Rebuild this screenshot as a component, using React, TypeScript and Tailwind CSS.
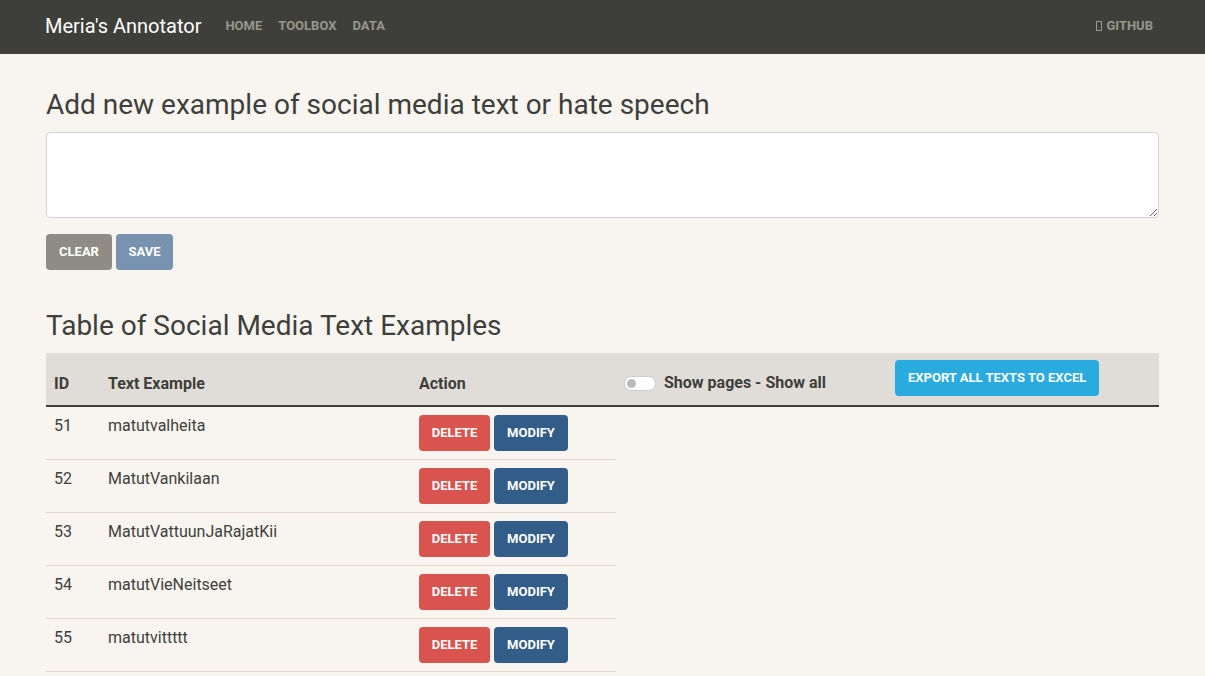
import React from "react";

const rows = [
  { id: 51, text: "matutvalheita" },
  { id: 52, text: "MatutVankilaan" },
  { id: 53, text: "MatutVattuunJaRajatKii" },
  { id: 54, text: "matutVieNeitseet" },
  { id: 55, text: "matutvittttt" },
];

export default function App() {
  return (
    <div
      className="h-[676px] overflow-hidden bg-[#f8f5f0] text-[#3e3f3a]"
      style={{ fontFamily: "Roboto, 'Liberation Sans', sans-serif" }}
    >
      <nav className="h-[54px] bg-[#3e3f3a] flex items-center pl-[45px] pr-[52px]">
        <span className="text-white text-[20px] leading-none -mt-[2px]">Meria's Annotator</span>
        <div className="flex items-center gap-[16px] ml-[24px] text-[13px] font-bold text-[#98978b] uppercase -mt-[2px]">
          <span>Home</span>
          <span>Toolbox</span>
          <span>Data</span>
        </div>
        <div className="ml-auto flex items-center text-[13px] font-bold text-[#98978b] uppercase -mt-[2px]">
          <span className="inline-block w-[6px] h-[10px] border border-[#98978b] mr-[4px]"></span>
          <span>Github</span>
        </div>
      </nav>

      <main className="w-[1113px] ml-[46px]">
        <h3 className="text-[28px] leading-[34px] mt-[34px] mb-0 font-normal">
          Add new example of social media text or hate speech
        </h3>
        <textarea className="block w-full h-[86px] mt-[10px] bg-white border border-[#ced4da] rounded-[4px] outline-none" />
        <div className="flex gap-[4px] mt-[16px]">
          <button className="h-[36px] w-[66px] rounded-[4px] bg-[#8e8c84] text-white text-[13px] font-bold uppercase">
            Clear
          </button>
          <button className="h-[36px] w-[57px] rounded-[4px] bg-[#7893b0] text-white text-[13px] font-bold uppercase">
            Save
          </button>
        </div>

        <h3 className="text-[28px] leading-[34px] mt-[39px] font-normal">
          Table of Social Media Text Examples
        </h3>
        <table className="w-full mt-[10px] border-collapse table-fixed">
          <colgroup>
            <col className="w-[54px]" />
            <col className="w-[311px]" />
            <col className="w-[205px]" />
            <col className="w-[271px]" />
            <col />
          </colgroup>
          <thead>
            <tr className="bg-[#e0ddd8] h-[53px] border-b-2 border-[#3e3f3a]">
              <th className="text-left text-[16px] font-bold px-[8px] pt-[10px]">ID</th>
              <th className="text-left text-[16px] font-bold px-[8px] pt-[10px]">Text Example</th>
              <th className="text-left text-[16px] font-bold px-[8px] pt-[10px]">Action</th>
              <th className="text-left text-[16px] font-bold px-[8px] pt-[8px]">
                <div className="flex items-center">
                  <span className="relative inline-block w-[32px] h-[15px] rounded-full bg-white border border-[#ccc] mr-[8px]">
                    <span className="absolute left-[2px] top-[2px] w-[9px] h-[9px] rounded-full bg-[#bbb]"></span>
                  </span>
                  <span>Show pages - Show all</span>
                </div>
              </th>
              <th className="text-left px-[8px]">
                <button className="h-[36px] px-[13px] rounded-[4px] bg-[#29abe0] text-white text-[13px] font-bold uppercase -mt-[2px]">
                  Export all texts to Excel
                </button>
              </th>
            </tr>
          </thead>
          <tbody>
            {rows.map((r) => (
              <tr key={r.id} className="h-[53px]">
                <td className="align-top border-b border-[#dfd7ca] px-[8px] pt-[7px] text-[16px] leading-[24px]">
                  {r.id}
                </td>
                <td className="align-top border-b border-[#dfd7ca] px-[8px] pt-[7px] text-[16px] leading-[24px]">
                  {r.text}
                </td>
                <td className="align-top border-b border-[#dfd7ca] px-[8px] pt-[8px] pb-[8px]">
                  <div className="flex gap-[4px]">
                    <button className="h-[36px] w-[71px] rounded-[4px] bg-[#d9534f] text-white text-[13px] font-bold uppercase">
                      Delete
                    </button>
                    <button className="h-[36px] w-[74px] rounded-[4px] bg-[#325d88] text-white text-[13px] font-bold uppercase">
                      Modify
                    </button>
                  </div>
                </td>
              </tr>
            ))}
          </tbody>
        </table>
      </main>
    </div>
  );
}
